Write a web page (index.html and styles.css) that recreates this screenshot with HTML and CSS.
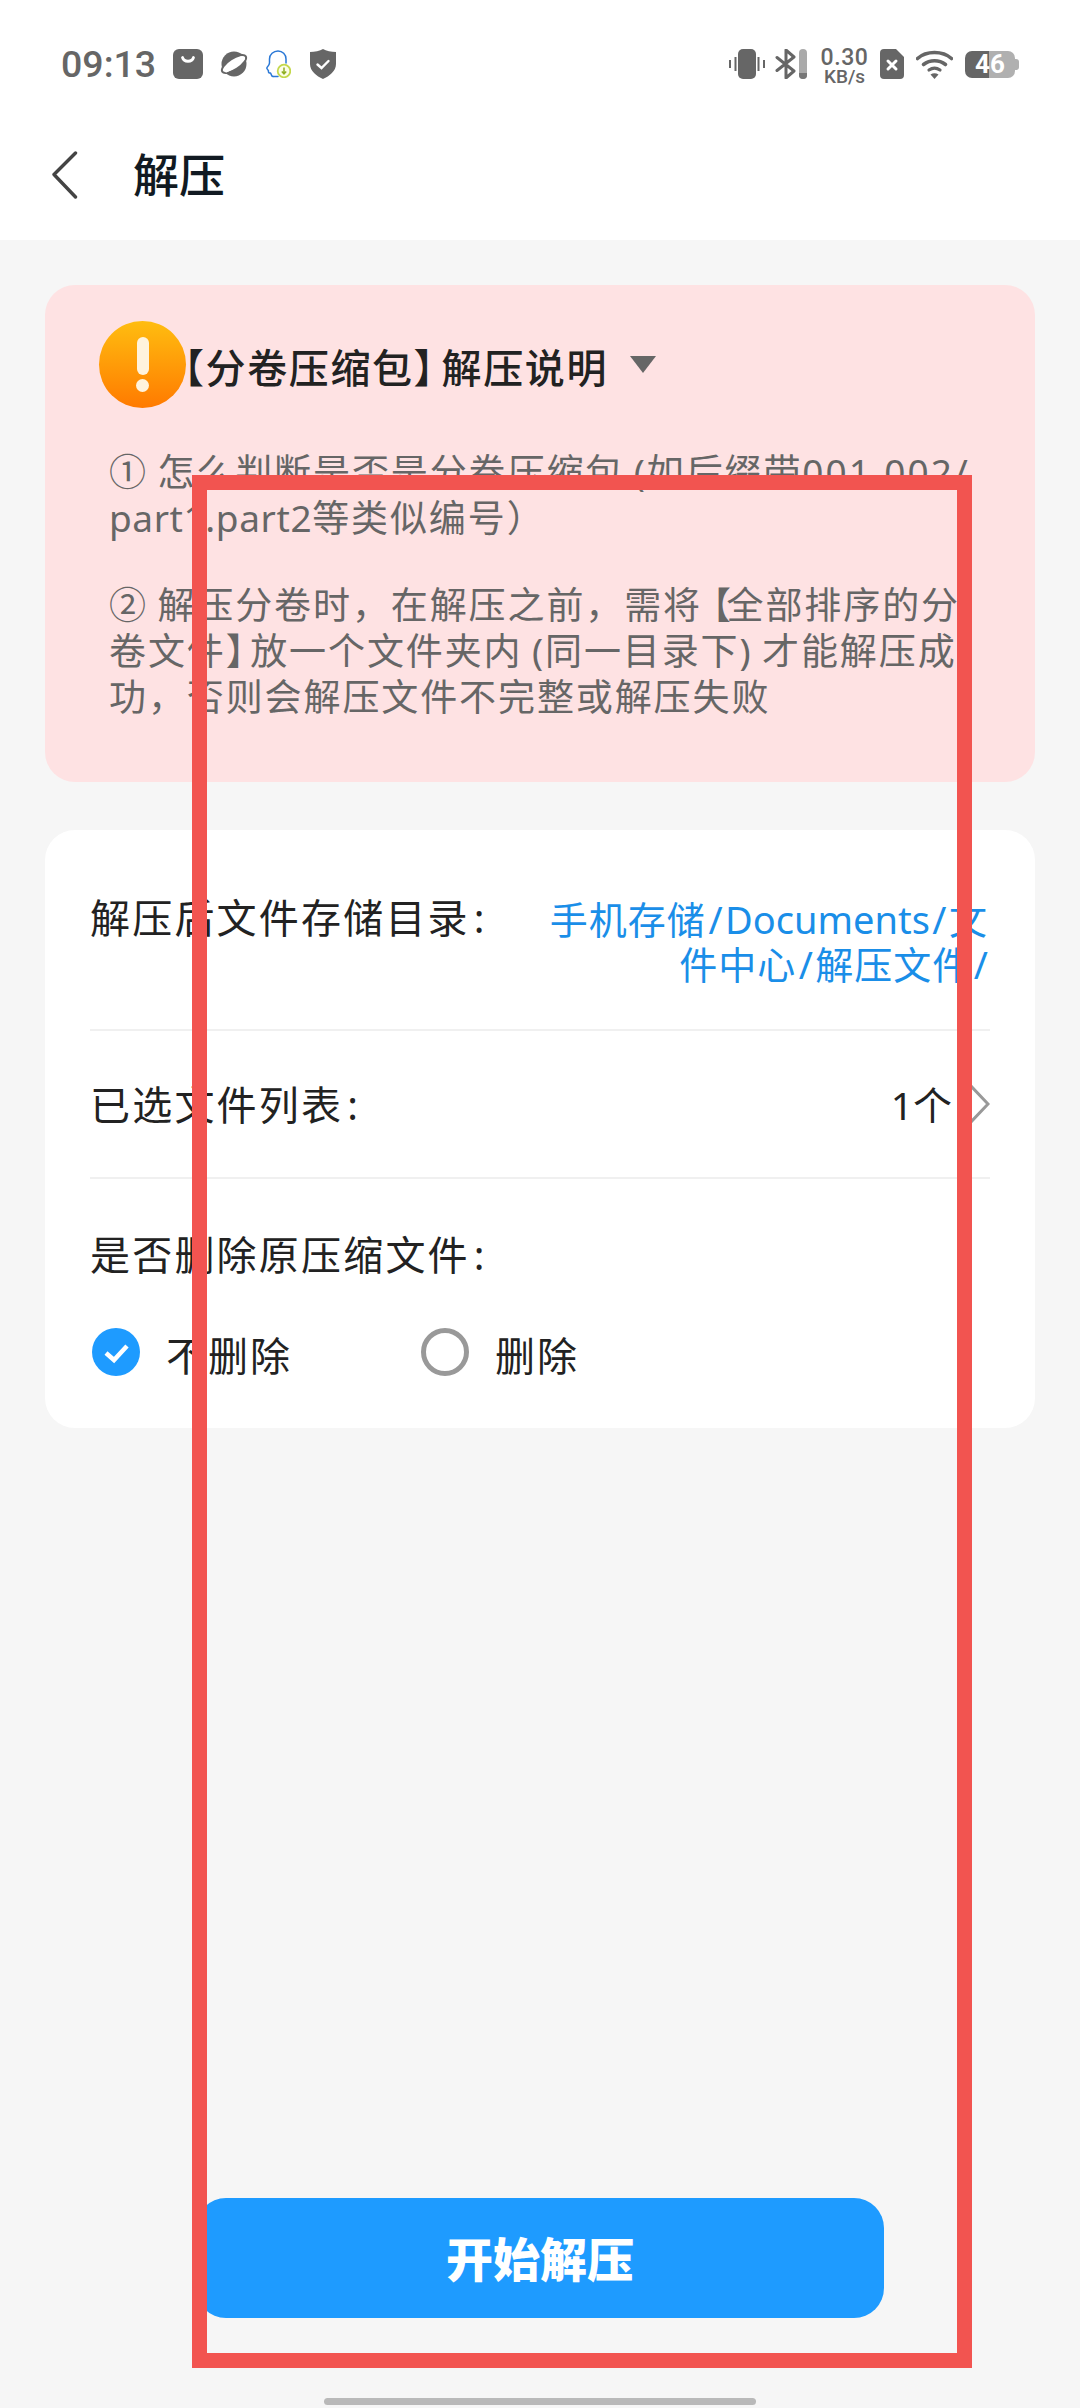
FILE: index.html
```html
<!DOCTYPE html>
<html lang="zh-CN">
<head>
<meta charset="utf-8">
<title>解压</title>
<link rel="stylesheet" href="styles.css">
</head>
<body>
<div class="page">
  <header class="top">
    <div class="status">
      <div class="status-group">
        <span class="time">09:13</span>
        <svg class="ic" width="30" height="30" viewBox="0 0 30 30"><rect width="30" height="30" rx="6" fill="#666"/><path d="M9.500 8.500c1.500 5 9.500 5 11 0" fill="none" stroke="#fff" stroke-width="2.800" stroke-linecap="round"/></svg>
        <svg class="ic" width="30" height="28" viewBox="0 0 30 28"><circle cx="15" cy="14" r="12.500" fill="#666"/><ellipse cx="15" cy="14" rx="14" ry="5.500" transform="rotate(-33 15 14)" fill="#fff" stroke="#666" stroke-width="2"/><path d="M6 20.500c3-1 14-8 18-13" fill="none" stroke="#fff" stroke-width="5"/></svg>
        <svg class="ic" width="26" height="28" viewBox="0 0 26 28"><path d="M8 26.500c-2 0-1.500-2.500-2.500-3.500-1.500 0-2.500-.5-2-2 0-1-2.500-2-1.500-3.500 1.500-1.500 2.500-2.500 2.500-4.500V9c0-4.500 4-8 8.500-8s8 3.500 8 8v4" fill="none" stroke="#2a78d6" stroke-width="1.500" stroke-linecap="round" stroke-linejoin="round"/><path d="M8 26.500h5" stroke="#2a78d6" stroke-width="1.500" stroke-linecap="round"/><circle cx="19" cy="21" r="6.300" fill="#fbfde8" stroke="#c4d84c" stroke-width="1.800"/><path d="M19 17.500v6M16.800 21.500l2.200 2.300 2.200-2.300" fill="none" stroke="#8fae22" stroke-width="1.500"/></svg>
        <svg class="ic shield" width="26" height="30" viewBox="0 0 26 30"><path d="M13 0c3 2 8.500 3 13 3v12c0 7-6.500 12-13 15C6.500 27 0 22 0 15V3c4.500 0 10-1 13-3z" fill="#666"/><path d="M7.500 15.500l4 3.500 7-7" fill="none" stroke="#fff" stroke-width="2.400" stroke-linecap="round"/></svg>
      </div>
      <div class="status-group status-group-right">
        <svg class="ic" width="36" height="30" viewBox="0 0 36 30"><rect x="9" width="18" height="30" rx="5" fill="#666"/><path d="M1 11v8M6.500 8v14M29.500 8v14M35 11v8" stroke="#666" stroke-width="2"/></svg>
        <svg class="ic ic-bt" width="32" height="30" viewBox="0 0 32 30"><path d="M2 8.500l17 13.500-8 7V1l8 7L2 21.500" fill="none" stroke="#666" stroke-width="3" stroke-linecap="round" stroke-linejoin="round"/><rect x="24" width="8" height="30" rx="4" fill="#aaa"/><path d="M24 24h8v2a4 4 0 0 1-8 0z" fill="#777"/></svg>
        <div class="speed"><span class="speed-num">0.30</span><span class="speed-unit">KB/s</span></div>
        <svg class="ic" width="24" height="30" viewBox="0 0 24 30"><path d="M4 0h12l8 8v18a4 4 0 0 1-4 4H4a4 4 0 0 1-4-4V4a4 4 0 0 1 4-4z" fill="#666"/><path d="M8 12l8 8M16 12l-8 8" stroke="#fff" stroke-width="3" stroke-linecap="round"/></svg>
        <svg class="ic" width="37" height="29" viewBox="0 0 37 29"><path d="M1.500 8.500c9-8 25-8 34 0" fill="none" stroke="#666" stroke-width="3.600" stroke-linecap="round"/><path d="M7.500 14.500c6.500-5 15.500-5 22 0" fill="none" stroke="#666" stroke-width="3.600" stroke-linecap="round"/><path d="M13 20c3.500-2.500 7.500-2.500 11 0" fill="none" stroke="#666" stroke-width="3.200" stroke-linecap="round"/><path d="M14.500 24.500q4-2.500 8 0L18.500 29z" fill="#666"/></svg>
        <div class="battery"><span class="battery-num">46</span></div>
      </div>
    </div>
    <nav class="nav">
      <svg class="back" width="26" height="48" viewBox="0 0 26 48"><path d="M23.500 2L2 23.500 23.500 46" fill="none" stroke="#444" stroke-width="3.400" stroke-linecap="round" stroke-linejoin="round"/></svg>
      <h1 class="nav-title">解压</h1>
    </nav>
  </header>

  <main class="main">
    <section class="alert">
      <div class="alert-head">
        <div class="warn"><span class="warn-bar"></span><span class="warn-dot"></span></div>
        <h2 class="alert-title">【分卷压缩包<span class="tight-title">】</span>解压说明</h2>
        <span class="caret"></span>
      </div>
      <div class="alert-body">
        <p class="para">① 怎么判断是否是分卷压缩包 (如后缀带<span class="num">001.002/</span><br><span class="latin">part1.part2</span>等类似编号）</p>
        <p class="para">② 解压分卷时，在解压之前，需将<span class="tight-open">【</span>全部排序的分<br>卷文件<span class="tight-close">】</span>放一个文件夹内 (同一目录下) 才能解压成<br>功，否则会解压文件不完整或解压失败</p>
      </div>
    </section>

    <section class="card">
      <div class="row row-path">
        <span class="label">解压后文件存储目录<span class="colon">:</span></span>
        <span class="path">手机存储<span class="sl">/</span><span class="doc">Documents</span><span class="sl">/</span>文<br>件中心<span class="sl">/</span>解压文件<span class="sl sl-end">/</span></span>
      </div>
      <div class="row row-files">
        <span class="label">已选文件列表<span class="colon">:</span></span>
        <div class="files-value">
          <span class="count">1个</span>
          <svg width="20" height="40" viewBox="0 0 20 40"><path d="M1 2l17 18L1 38" fill="none" stroke="#999" stroke-width="3"/></svg>
        </div>
      </div>
      <div class="row-delete">
        <span class="label">是否删除原压缩文件<span class="colon">:</span></span>
        <div class="options">
          <div class="option option-first">
            <svg width="48" height="48" viewBox="0 0 48 48"><circle cx="24" cy="24" r="24" fill="#1e9bff"/><path d="M14 25l8 7 13-14" fill="none" stroke="#fff" stroke-width="4.500"/></svg>
            <span class="option-text">不删除</span>
          </div>
          <div class="option">
            <span class="radio"></span>
            <span class="option-text">删除</span>
          </div>
        </div>
      </div>
    </section>

    <button class="start"><span class="start-text">开始解压</span></button>
    <div class="home-wrap"><span class="home"></span></div>
  </main>
  <div class="frame"></div>
</div>
</body>
</html>
```

FILE: styles.css
```css
* { box-sizing: border-box; }
html, body { margin: 0; padding: 0; }
body {
  font-family: "Noto Sans", "Noto Sans CJK SC", sans-serif;
  background: #f6f6f6;
}
.page {
  position: relative;
  width: 1080px;
  height: 2408px;
  display: flex;
  flex-direction: column;
  overflow: hidden;
}
.top { background: #fff; height: 240px; flex: none; }
.status {
  height: 110px;
  padding: 34px 61px 16px 61px;
  display: flex;
  justify-content: space-between;
  align-items: flex-start;
}
.status-group { height: 60px; display: flex; align-items: center; gap: 16px; }
.status-group-right { gap: 12px; }
.ic { flex: none; display: block; }
.shield { margin-left: 3px; }
.ic-bt { margin-left: -2px; margin-right: 2px; }
.time {
  font-family: "Roboto", sans-serif;
  font-size: 37.500px;
  font-weight: 500;
  color: #666;
  line-height: 60px;
  width: 96px;
}
.speed { width: 47px; display: flex; flex-direction: column; align-items: center; color: #666; font-family: "Roboto", sans-serif; font-weight: 500; margin-top: 4px; }
.speed-num { font-size: 23px; line-height: 20px; letter-spacing: 0.6px; }
.speed-unit { font-size: 19px; line-height: 17px; }
.battery {
  position: relative;
  width: 50px;
  height: 27px;
  margin-right: 4px;
  margin-top: 1px;
  border-radius: 7px;
  background: linear-gradient(90deg, #666 0, #666 24px, #b0b0b0 24px, #b0b0b0 100%);
  display: flex;
  align-items: center;
  justify-content: center;
}
.battery::after {
  content: "";
  position: absolute;
  right: -4px;
  top: 8px;
  width: 4px;
  height: 11px;
  border-radius: 0 3px 3px 0;
  background: #b0b0b0;
}
.battery-num { font-family: "Roboto", sans-serif; font-size: 26px; font-weight: 700; color: #fff; line-height: 27px; }
.nav { height: 130px; padding-left: 52px; display: flex; align-items: center; }
.back { flex: none; }
.nav-title {
  margin: 0 0 2px 55px;
  font-size: 46px;
  font-weight: 500;
  color: #111a22;
  line-height: 60px;
}
.main {
  flex: 1;
  display: flex;
  flex-direction: column;
  padding: 45px 45px 0;
  min-height: 0;
}
.alert {
  height: 497px;
  flex: none;
  background: #fee2e3;
  border-radius: 30px;
  padding-top: 36px;
}
.alert-head { height: 87px; padding-left: 54px; display: flex; align-items: center; }
.warn {
  flex: none;
  position: relative;
  z-index: 1;
  width: 87px;
  height: 87px;
  border-radius: 50%;
  background: linear-gradient(180deg, #ffbd10 0%, #ff7a00 100%);
  display: flex;
  flex-direction: column;
  align-items: center;
  padding-top: 16px;
}
.warn-bar { width: 12px; height: 38px; border-radius: 6px; background: #fff3dd; }
.warn-dot { width: 13px; height: 13px; margin-top: 4px; border-radius: 50%; background: #fff3dd; }
.alert-title {
  margin: 6px 0 0 -22px;
  font-size: 40px;
  font-weight: 500;
  letter-spacing: 1.6px;
  color: #222;
  line-height: 50px;
  white-space: nowrap;
}
.tight-title { letter-spacing: -12px; }
.caret {
  flex: none;
  margin: 0 0 0 22px;
  width: 0;
  height: 0;
  border-left: 13px solid transparent;
  border-right: 13px solid transparent;
  border-top: 17px solid #666;
}
.alert-body { margin-top: 41px; padding-left: 64px; color: #666; font-size: 37px; line-height: 46px; letter-spacing: 1.9px; word-spacing: -2px; }
.para { margin: 0 0 41px; white-space: nowrap; }
.num { letter-spacing: 2.100px; }
.latin { letter-spacing: 0.6px; }
.tight-open { margin-left: -8px; letter-spacing: -4.500px; }
.tight-close { letter-spacing: -12.500px; }
.card {
  flex: none;
  height: 598px;
  margin-top: 48px;
  padding: 0 45px;
  background: #fff;
  border-radius: 30px;
}
.row { display: flex; justify-content: space-between; border-bottom: 2px solid #f0f0f0; }
.row-path { height: 201px; padding-top: 65px; }
.row-files { height: 148px; align-items: center; }
.label { font-size: 40px; letter-spacing: 2.200px; line-height: 45px; color: #222; white-space: nowrap; }
.colon { margin-left: 4px; }
.path { margin-top: 2px; margin-right: 2px; font-size: 38px; letter-spacing: 1px; line-height: 45px; color: #1a8ee8; text-align: right; white-space: nowrap; }
.doc { letter-spacing: 0; }
.sl { padding: 0 2.500px; letter-spacing: 0; }
.sl-end { padding-right: 0; }
.files-value { display: flex; align-items: center; gap: 18px; }
.count { font-size: 39px; line-height: 45px; color: #222; }
.row-delete { padding-top: 53px; display: flex; flex-direction: column; }
.options { display: flex; margin-top: 48px; }
.option { display: flex; align-items: center; gap: 28px; }
.option-first { width: 331px; padding-left: 2px; }
.option svg, .radio { flex: none; display: block; }
.radio { width: 48px; height: 48px; border-radius: 50%; border: 5px solid #999; }
.option-text { font-size: 40px; letter-spacing: 2px; line-height: 45px; color: #222; margin-top: 8px; margin-left: -2px; }
.start {
  flex: none;
  display: block;
  margin: auto 0 0 151px;
  padding: 0 0 4px;
  width: 688px;
  height: 120px;
  border: 0;
  border-radius: 30px;
  background: #1e9bff;
  color: #fff;
  font-family: inherit;
  font-size: 47px;
  font-weight: 900;
}
.home-wrap { flex: none; height: 90px; padding-top: 80px; display: flex; justify-content: center; }
.home { width: 432px; height: 7px; border-radius: 4px; background: #b9b9b9; }
.frame {
  position: absolute;
  left: 192px;
  top: 475px;
  width: 780px;
  height: 1893px;
  border: 15px solid #f25450;
  pointer-events: none;
}
```
